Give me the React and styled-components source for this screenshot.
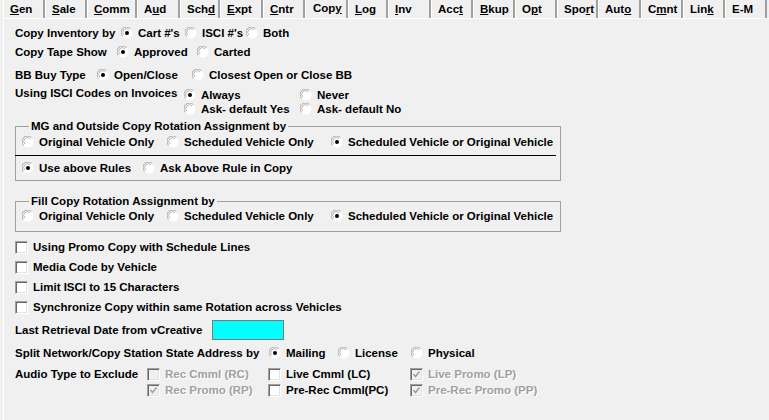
import React from 'react'
import styled, { createGlobalStyle } from 'styled-components'

const GlobalStyle = createGlobalStyle`
  html, body {
    margin: 0;
    background: #f0f0f0;
  }
  body {
    font: bold 11.5px "Liberation Sans", Arial, sans-serif;
    color: #000;
  }
`

const Window = styled.div`
  width: 769px;
  height: 420px;
  overflow: hidden;
  background: #f0f0f0;
  display: flex;
  flex-direction: column;
`

const TabStrip = styled.div`
  display: flex;
  height: 18px;
  padding-left: 3px;
  flex: none;
`

const Tab = styled.div`
  box-sizing: border-box;
  width: ${p => p.w}px;
  height: 18px;
  line-height: ${p => (p.active ? 16 : 18)}px;
  padding-left: ${p => (p.active ? 7 : 6)}px;
  border-left: 1px solid #fff;
  border-right: 2px solid #a0a0a0;
  white-space: nowrap;
  u {
    text-decoration: underline;
    text-underline-offset: 1px;
  }
`

const Panel = styled.div`
  flex: 1;
  margin-left: 3px;
  border-top: 1px solid #fff;
  border-left: 1px solid #fff;
  padding: 6px 0 0 11px;
`

const Row = styled.div`
  display: flex;
  align-items: ${p => (p.top ? 'flex-start' : 'center')};
  height: ${p => p.h || 16}px;
  margin-top: ${p => p.mt || 0}px;
  white-space: nowrap;
`

const Label = styled.span`
  flex: none;
  width: ${p => p.w}px;
  line-height: ${p => p.lh || 16}px;
`

const Stack = styled.div`
  display: flex;
  flex-direction: column;
  margin-top: ${p => p.mt || 0}px;
`

const Choice = styled.label`
  display: inline-flex;
  align-items: center;
  flex: none;
  height: ${p => p.h || 16}px;
  width: ${p => (p.w ? `${p.w}px` : 'auto')};
  color: ${p => (p.disabled ? '#a0a0a0' : '#000')};
  text-shadow: ${p => (p.disabled ? '1px 1px 0 #fff' : 'none')};
`

const Mark = styled.span`
  display: inline-flex;
  flex: none;
  margin-right: ${p => p.gap || 5}px;
`

const Box = styled.span`
  box-sizing: border-box;
  display: inline-flex;
  align-items: center;
  justify-content: center;
  width: 13px;
  height: 13px;
  flex: none;
  margin-right: 5px;
  background: ${p => (p.disabled ? '#f0f0f0' : '#fff')};
  border: 1px solid;
  border-color: #a0a0a0 #fff #fff #a0a0a0;
  box-shadow: inset 1px 1px 0 #696969, inset -1px -1px 0 #e3e3e3;
`

const Group = styled.fieldset`
  box-sizing: border-box;
  width: 546px;
  margin: ${p => p.mt || 0}px 0 0 0;
  padding: 0 0 ${p => p.pb || 0}px 6px;
  border: 1px solid #a0a0a0;
  min-width: 0;
`

const Legend = styled.legend`
  margin-left: 7px;
  padding: 0 2px;
  line-height: 13px;
`

const Divider = styled.div`
  height: 1px;
  background: #000;
  margin: 5px 4px 0 -7px;
`

const DateBox = styled.div`
  box-sizing: border-box;
  width: 72px;
  height: 20px;
  background: #00ffff;
  border: 1px solid #7a7a7a;
`

function Radio({ checked }) {
  return (
    <Mark gap={5}>
      <svg width="12" height="12" viewBox="0 0 12 12">
        <circle cx="6" cy="6" r="5.5" fill="#fff" />
        <path d="M1.6 9.4 A5 5 0 0 1 9.4 1.6" stroke="#a0a0a0" fill="none" />
        <path d="M2.8 8 A3.6 3.6 0 0 1 8 2.8" stroke="#b4b4b4" fill="none" />
        {checked && <circle cx="6" cy="6" r="2" fill="#000" />}
      </svg>
    </Mark>
  )
}

function Check({ checked, disabled }) {
  return (
    <Box disabled={disabled}>
      {checked && (
        <svg width="9" height="9" viewBox="0 0 9 9">
          <path d="M1.5 4 L3.5 6.5 L7.5 1.5" stroke={disabled ? '#a0a0a0' : '#000'} strokeWidth="1.5" fill="none" />
        </svg>
      )}
    </Box>
  )
}

function RadioChoice({ w, checked, children }) {
  return (
    <Choice w={w}>
      <Radio checked={checked} />
      {children}
    </Choice>
  )
}

function CheckChoice({ w, checked, disabled, children }) {
  return (
    <Choice w={w} disabled={disabled}>
      <Check checked={checked} disabled={disabled} />
      {children}
    </Choice>
  )
}

const tabs = [
  { w: 42, pre: '', key: 'G', post: 'en' },
  { w: 42, pre: '', key: 'S', post: 'ale' },
  { w: 50, pre: '', key: 'C', post: 'omm' },
  { w: 43, pre: 'A', key: 'u', post: 'd' },
  { w: 40, pre: 'Sch', key: 'd', post: '' },
  { w: 43, pre: '', key: 'E', post: 'xpt' },
  { w: 42, pre: '', key: 'C', post: 'ntr' },
  { w: 43, pre: 'Cop', key: 'y', post: '', active: true },
  { w: 40, pre: '', key: 'L', post: 'og' },
  { w: 43, pre: '', key: 'I', post: 'nv' },
  { w: 42, pre: 'Acc', key: 't', post: '' },
  { w: 42, pre: '', key: 'B', post: 'kup' },
  { w: 42, pre: 'O', key: 'p', post: 't' },
  { w: 41, pre: 'Spo', key: 'r', post: 't' },
  { w: 43, pre: 'Aut', key: 'o', post: '' },
  { w: 42, pre: 'C', key: 'm', post: 'nt' },
  { w: 42, pre: 'Lin', key: 'k', post: '' },
  { w: 42, pre: 'E-M', key: '', post: '' },
]

export default function App() {
  return (
    <Window>
      <GlobalStyle />
      <TabStrip>
        {tabs.map((t, i) => (
          <Tab key={i} w={t.w} active={t.active}>
            {t.pre}
            {t.key && <u>{t.key}</u>}
            {t.post}
          </Tab>
        ))}
      </TabStrip>
      <Panel>
        <Row>
          <Label w={106}>Copy Inventory by</Label>
          <RadioChoice w={64} checked>Cart #'s</RadioChoice>
          <RadioChoice w={61}>ISCI #'s</RadioChoice>
          <RadioChoice>Both</RadioChoice>
        </Row>
        <Row mt={3}>
          <Label w={102}>Copy Tape Show</Label>
          <RadioChoice w={80} checked>Approved</RadioChoice>
          <RadioChoice>Carted</RadioChoice>
        </Row>
        <Row mt={7}>
          <Label w={82}>BB Buy Type</Label>
          <RadioChoice w={95} checked>Open/Close</RadioChoice>
          <RadioChoice>Closest Open or Close BB</RadioChoice>
        </Row>
        <Row mt={3} h={30} top>
          <Label w={169} lh={14}>Using ISCI Codes on Invoices</Label>
          <Stack mt={2}>
            <Row h={14}>
              <RadioChoice w={116} checked>Always</RadioChoice>
              <RadioChoice>Never</RadioChoice>
            </Row>
            <Row h={14}>
              <RadioChoice w={116}>Ask- default Yes</RadioChoice>
              <RadioChoice>Ask- default No</RadioChoice>
            </Row>
          </Stack>
        </Row>

        <Group mt={4} pb={4}>
          <Legend>MG and Outside Copy Rotation Assignment by</Legend>
          <Row mt={1}>
            <RadioChoice w={145}>Original Vehicle Only</RadioChoice>
            <RadioChoice w={164}>Scheduled Vehicle Only</RadioChoice>
            <RadioChoice checked>Scheduled Vehicle or Original Vehicle</RadioChoice>
          </Row>
          <Divider />
          <Row mt={4}>
            <RadioChoice w={121} checked>Use above Rules</RadioChoice>
            <RadioChoice>Ask Above Rule in Copy</RadioChoice>
          </Row>
        </Group>

        <Group mt={14} pb={7}>
          <Legend>Fill Copy Rotation Assignment by</Legend>
          <Row mt={0}>
            <RadioChoice w={145}>Original Vehicle Only</RadioChoice>
            <RadioChoice w={164}>Scheduled Vehicle Only</RadioChoice>
            <RadioChoice checked>Scheduled Vehicle or Original Vehicle</RadioChoice>
          </Row>
        </Group>

        <Row mt={7}>
          <CheckChoice>Using Promo Copy with Schedule Lines</CheckChoice>
        </Row>
        <Row mt={4}>
          <CheckChoice>Media Code by Vehicle</CheckChoice>
        </Row>
        <Row mt={4}>
          <CheckChoice>Limit ISCI to 15 Characters</CheckChoice>
        </Row>
        <Row mt={4}>
          <CheckChoice>Synchronize Copy within same Rotation across Vehicles</CheckChoice>
        </Row>

        <Row mt={5} h={20}>
          <Label w={197}>Last Retrieval Date from vCreative</Label>
          <DateBox />
        </Row>
        <Row mt={5}>
          <Label w={254}>Split Network/Copy Station State Address by</Label>
          <RadioChoice w={69} checked>Mailing</RadioChoice>
          <RadioChoice w={73}>License</RadioChoice>
          <RadioChoice>Physical</RadioChoice>
        </Row>
        <Row mt={5} h={32} top>
          <Label w={132}>Audio Type to Exclude</Label>
          <Stack>
            <Row>
              <CheckChoice w={121} disabled>Rec Cmml (RC)</CheckChoice>
              <CheckChoice w={142}>Live Cmml (LC)</CheckChoice>
              <CheckChoice checked disabled>Live Promo (LP)</CheckChoice>
            </Row>
            <Row>
              <CheckChoice w={121} checked disabled>Rec Promo (RP)</CheckChoice>
              <CheckChoice w={142}>Pre-Rec Cmml(PC)</CheckChoice>
              <CheckChoice checked disabled>Pre-Rec Promo (PP)</CheckChoice>
            </Row>
          </Stack>
        </Row>
      </Panel>
    </Window>
  )
}
